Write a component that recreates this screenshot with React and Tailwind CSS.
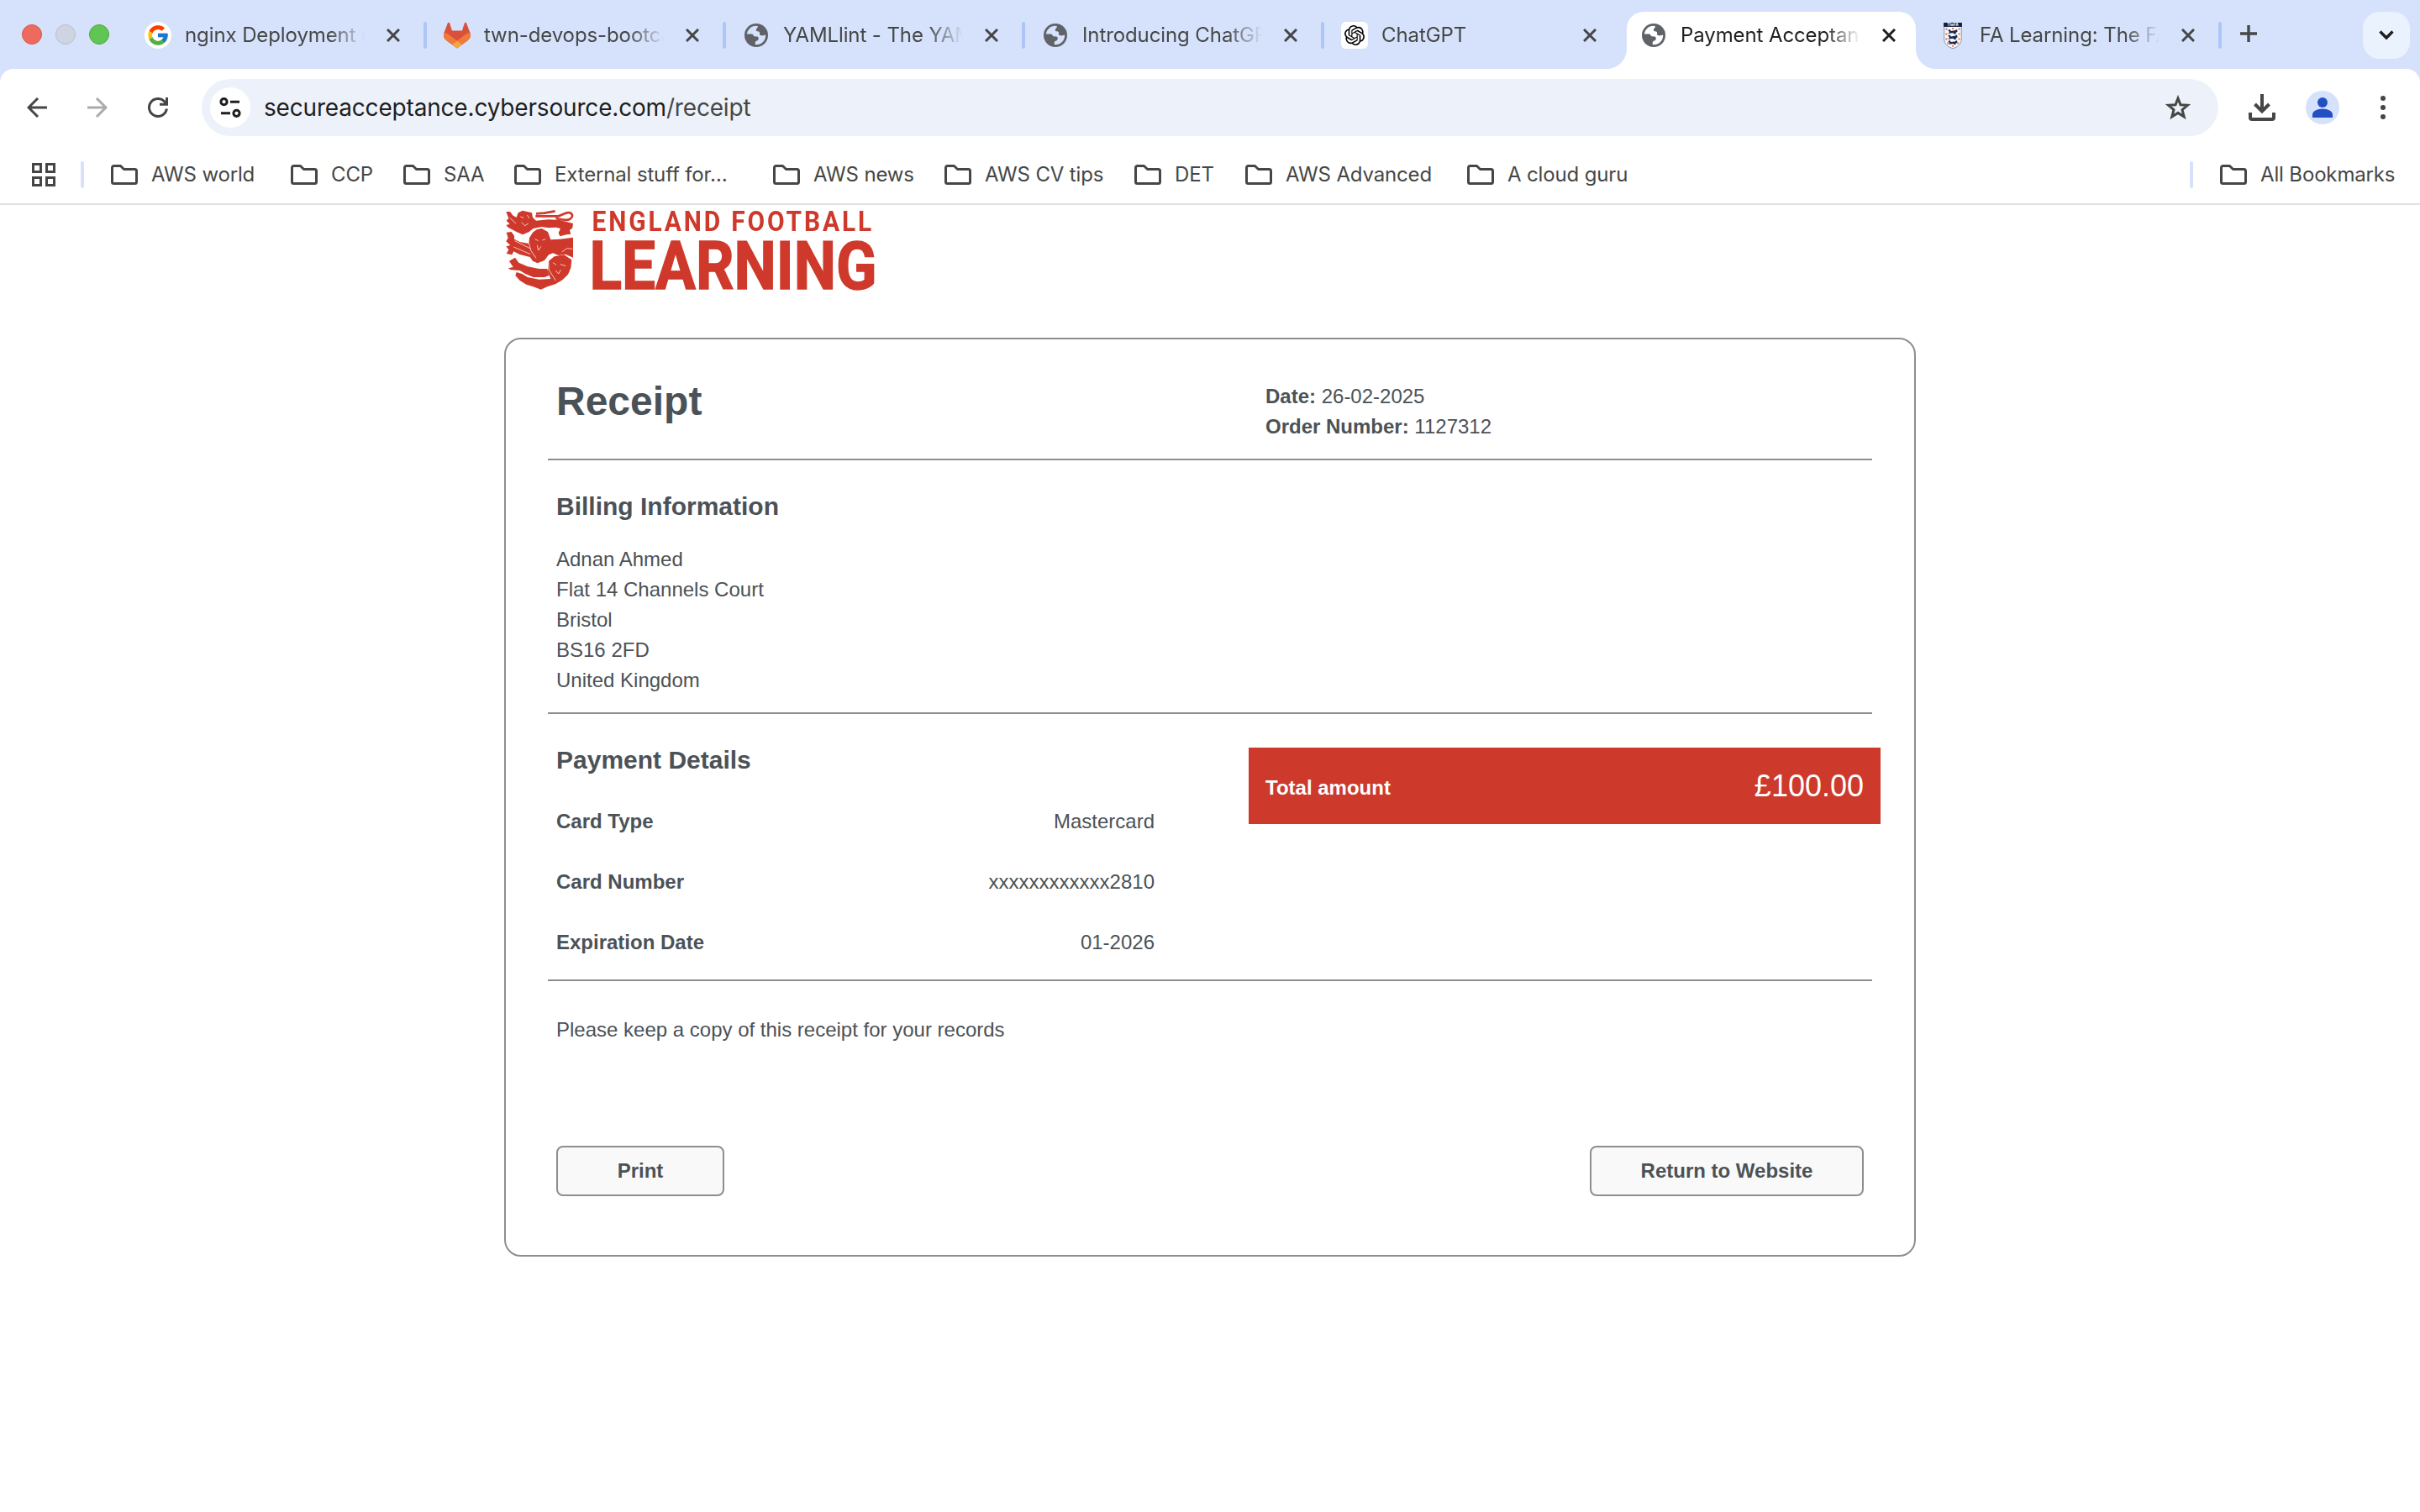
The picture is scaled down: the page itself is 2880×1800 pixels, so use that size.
import React from "react";
import { FcGoogle } from "react-icons/fc";
import { SiOpenai } from "react-icons/si";

function GitlabIcon() {
  return (
    <svg viewBox="0 0 25 24" className="size-8">
      <path fill="#d9513a" d="M24.507 9.5l-.034-.09L21.082.562a.896.896 0 00-1.694.091l-2.29 7.01H7.825L5.535.653a.898.898 0 00-1.694-.09L.451 9.411.416 9.5a6.297 6.297 0 002.09 7.278l.012.01.03.022 5.16 3.867 2.56 1.935 1.554 1.176a1.051 1.051 0 001.268 0l1.555-1.176 2.56-1.935 5.197-3.89.014-.01A6.297 6.297 0 0024.507 9.5z" />
      <path fill="#ee7a3b" d="M24.507 9.5l-.034-.09a11.44 11.44 0 00-4.56 2.051l-7.447 5.632 4.742 3.584 5.197-3.89.014-.01A6.297 6.297 0 0024.507 9.5z" />
      <path fill="#f2a83f" d="M7.707 20.677l2.56 1.935 1.555 1.176a1.051 1.051 0 001.268 0l1.555-1.176 2.56-1.935-4.743-3.584-4.755 3.584z" />
      <path fill="#ee7a3b" d="M5.01 11.461a11.43 11.43 0 00-4.56-2.05L.416 9.5a6.297 6.297 0 002.09 7.278l.012.01.03.022 5.16 3.867 4.745-3.584-7.444-5.632z" />
    </svg>
  );
}

function GlobeIcon({ gap = "#d6e2fc" }) {
  return (
    <svg viewBox="0 0 28 28" className="size-7">
      <circle cx="14" cy="14" r="14" fill="#5f6368" />
      <circle cx="14" cy="14" r="11.2" fill={gap} />
      <g fill="#5f6368">
        <path d="M15.2 1 C16.4 3.4 15.8 5.4 14 6.6 L14 9 L17 9.4 C18.6 10 18 12 18 13.6 L21 14.4 L26.6 13.2 A13 13 0 0 0 15.2 1 Z" />
        <path d="M1 12.6 H9 C10.6 12.8 10.2 14.8 11.6 15.2 L15 15.6 C17 16 17.4 18.6 15.8 20 C14.6 21 12.8 20.6 12.8 22.4 L12.6 26.6 A13 13 0 0 1 1 12.6 Z" />
      </g>
    </svg>
  );
}

function CrestIcon() {
  return (
    <svg viewBox="0 0 66 94" className="h-[31px] w-[22px]">
      <path d="M2 4 H64 V60 C64 78 50 88 33 93 C16 88 2 78 2 60 Z" fill="#f7f8fb" stroke="#8b93a6" strokeWidth="3" />
      <rect x="0" y="0" width="66" height="15" fill="#0f1c46" />
      <text x="33" y="12.5" textAnchor="middle" fontSize="13" fontWeight="700" fill="#fff" fontFamily="Inter, sans-serif">TheFA</text>
      <g fill="#1c2850">
        <path d="M15 27 L23 24 L26 30 L40 28 L48 24 L50 32 L43 37 L46 41 H38 L34 37 L24 38 L16 41 L21 33 Z" />
        <path d="M15 47 L23 44 L26 50 L40 48 L48 44 L50 52 L43 57 L46 61 H38 L34 57 L24 58 L16 61 L21 53 Z" />
        <path d="M16 67 L23 64 L26 70 L40 68 L48 64 L50 71 L43 75 L45 79 H38 L34 76 L24 77 L19 79 L21 73 Z" />
      </g>
      <g fill="#e8663f">
        {[20, 38, 56].map((y) => (
          <React.Fragment key={y}>
            <rect x="7" y={y} width="6" height="6" />
            <rect x="53" y={y} width="6" height="6" />
          </React.Fragment>
        ))}
        <rect x="30" y="19" width="6" height="5" />
        <rect x="30" y="82" width="6" height="5" />
        <rect x="12" y="71" width="6" height="6" />
        <rect x="49" y="71" width="6" height="6" />
      </g>
    </svg>
  );
}

function Close({ color }) {
  return (
    <svg viewBox="0 0 16 16" className="size-4" stroke={color} strokeWidth="3" fill="none">
      <path d="M1 1 L15 15 M15 1 L1 15" />
    </svg>
  );
}

function Flare({ side }) {
  return (
    <svg viewBox="0 0 24 24" className={side === "left" ? "absolute right-full bottom-0 size-6" : "absolute bottom-0 left-full size-6 -scale-x-100"}>
      <path d="M24 0 V24 H0 C13.3 24 24 13.3 24 0 Z" fill="#fff" />
    </svg>
  );
}

const tabs = [
  { title: "nginx Deployment Configuration", icon: <span className="flex size-8 items-center justify-center rounded-full bg-white"><FcGoogle className="size-7" /></span>, sep: true },
  { title: "twn-devops-bootcamp", icon: <GitlabIcon />, sep: true },
  { title: "YAMLlint - The YAML Validator", icon: <GlobeIcon />, sep: true },
  { title: "Introducing ChatGPT", icon: <GlobeIcon />, sep: true },
  { title: "ChatGPT", icon: <span className="flex size-8 items-center justify-center rounded-md bg-white"><SiOpenai className="size-6 text-black" /></span> },
  { title: "Payment Acceptance", icon: <GlobeIcon gap="#ffffff" />, active: true },
  { title: "FA Learning: The FA", icon: <CrestIcon />, sep: true },
];

function Tab({ title, icon, sep, active }) {
  return (
    <div className="flex h-[68px] w-[356px] shrink-0">
      <div className={active ? "relative flex w-[344px] rounded-t-[20px] bg-white pt-3 pl-4" : "flex w-[344px] pt-3 pl-4"}>
        {active && <Flare side="left" />}
        {active && <Flare side="right" />}
        <div className="flex size-8 shrink-0 items-center justify-center">{icon}</div>
        <div className={`ml-4 h-8 w-[214px] shrink-0 overflow-hidden text-2xl leading-8 tracking-[-0.1px] whitespace-nowrap [mask-image:linear-gradient(to_right,black_172px,transparent_214px)] ${active ? "text-[#1f1f1f]" : "text-[#454746]"}`}>
          {title}
        </div>
        <div className="ml-[26px] flex h-8 items-center">
          <Close color={active ? "#1f1f1f" : "#454746"} />
        </div>
      </div>
      {sep && <div className="mt-3 ml-1 h-8 w-1 rounded-full bg-[#adc6f7]" />}
    </div>
  );
}

function FolderIcon() {
  return (
    <svg viewBox="0 0 32 24" className="h-6 w-8 shrink-0" fill="none" stroke="#454746" strokeWidth="3" strokeLinejoin="round">
      <path d="M1.5 3.5 a2 2 0 0 1 2 -2 H11.5 L15.5 5.5 H28.5 a2 2 0 0 1 2 2 V20.5 a2 2 0 0 1 -2 2 H3.5 a2 2 0 0 1 -2 -2 Z" />
    </svg>
  );
}

function Bookmark({ label, width }) {
  return (
    <div className={`flex shrink-0 items-center gap-4 ${width}`}>
      <FolderIcon />
      <span className="text-2xl leading-8 tracking-[-0.15px] whitespace-nowrap text-[#454746]">{label}</span>
    </div>
  );
}

const bookmarks = [
  ["AWS world", "w-[214px]"],
  ["CCP", "w-[134px]"],
  ["SAA", "w-[132px]"],
  ["External stuff for…", "w-[308px]"],
  ["AWS news", "w-[204px]"],
  ["AWS CV tips", "w-[226px]"],
  ["DET", "w-[132px]"],
  ["AWS Advanced", "w-[264px]"],
  ["A cloud guru", "w-[240px]"],
];

function TabStrip() {
  return (
    <div className="flex h-[82px] bg-[#d6e2fc] pt-[14px]">
      <div className="flex w-[156px] shrink-0 gap-4 pt-[15px] pl-[26px]">
        <div className="size-6 rounded-full border border-[#d5584d] bg-[#ed6a5e]" />
        <div className="size-6 rounded-full border border-[#b9bfcb] bg-[#ced4e1]" />
        <div className="size-6 rounded-full border border-[#51a73e] bg-[#61c554]" />
      </div>
      {tabs.map((t) => (
        <Tab key={t.title} {...t} />
      ))}
      <svg viewBox="0 0 20 20" className="mt-4 ml-[18px] size-5 shrink-0" stroke="#454746" strokeWidth="3.4">
        <path d="M10 0 V20 M0 10 H20" />
      </svg>
      <div className="mr-3 ml-auto flex size-14 items-center justify-center rounded-[20px] bg-[#eaf2fd]">
        <svg viewBox="0 0 18 12" className="h-3 w-[18px]" fill="none" stroke="#1f1f1f" strokeWidth="3.4">
          <path d="M1.5 1.5 L9 9 L16.5 1.5" />
        </svg>
      </div>
    </div>
  );
}

function Toolbar() {
  return (
    <div className="bg-[#d6e2fc]">
      <div className="flex h-[92px] items-center rounded-t-2xl bg-white pl-8">
        <svg viewBox="0 0 24 24" className="size-6 shrink-0" fill="none" stroke="#454746" strokeWidth="3">
          <path d="M24 12 H2 M13 1 L2 12 L13 23" />
        </svg>
        <svg viewBox="0 0 24 24" className="ml-12 size-6 shrink-0" fill="none" stroke="#aaabaa" strokeWidth="3">
          <path d="M0 12 H22 M11 1 L22 12 L11 23" />
        </svg>
        <svg viewBox="0 0 24 24" className="ml-12 size-6 shrink-0" fill="none" stroke="#454746" strokeWidth="3">
          <path d="M22.4 13.5 A10.5 10.5 0 1 1 20.2 5.4 L22.2 8 M22.5 0 V8.3 H14" />
        </svg>
        <div className="ml-10 flex h-[68px] w-[2400px] shrink-0 items-center rounded-full bg-[#edf2fa] pl-[10px]">
          <div className="flex size-12 items-center justify-center rounded-full bg-white">
            <svg viewBox="0 0 26 24" className="h-6 w-[26px]" fill="none" stroke="#1f1f1f" strokeWidth="3">
              <circle cx="5.5" cy="5.2" r="3.6" />
              <circle cx="20.5" cy="18.8" r="3.6" />
              <path d="M13 5.2 H24 M2 18.8 H13" />
            </svg>
          </div>
          <div className="ml-4 text-[28px] leading-[34px] tracking-[-0.18px] whitespace-nowrap text-[#1f1f1f]">
            secureacceptance.cybersource.com<span className="text-[#474747]">/receipt</span>
          </div>
          <svg viewBox="0 0 30 30" className="mr-[33px] ml-auto size-[30px]" fill="none" stroke="#454746" strokeWidth="3">
            <path d="M15 4 L18 11.8 L26.4 12.3 L20 17.7 L22.2 26 L15 21.4 L7.8 26 L10 17.7 L3.6 12.3 L12 11.8 Z" />
          </svg>
        </div>
        <svg viewBox="0 0 32 32" className="ml-9 size-8 shrink-0" fill="none" stroke="#454746" strokeWidth="4">
          <path d="M16 0 V21 M7.5 12 L16 20.5 L24.5 12 M2 22 V28 a2 2 0 0 0 2 2 H28 a2 2 0 0 0 2 -2 V22" />
        </svg>
        <div className="ml-9 flex size-10 shrink-0 items-center justify-center rounded-full bg-[#d6e2fb]">
          <svg viewBox="0 0 24 24" className="size-6" fill="#2150c4">
            <circle cx="12" cy="6" r="6" />
            <path d="M0 24 V20.5 C0 16.5 5.5 13.6 12 13.6 S24 16.5 24 20.5 V24 Z" />
          </svg>
        </div>
        <svg viewBox="0 0 6 28" className="ml-[49px] h-7 w-1.5 shrink-0" fill="#454746">
          <circle cx="3" cy="3" r="3" />
          <circle cx="3" cy="14" r="3" />
          <circle cx="3" cy="25" r="3" />
        </svg>
      </div>
    </div>
  );
}

function BookmarksBar() {
  return (
    <div className="flex h-[70px] items-center border-b-2 border-[#e1e1e1] bg-white pl-[38px]">
      <svg viewBox="0 0 28 28" className="size-7 shrink-0" fill="none" stroke="#454746" strokeWidth="3">
        <path d="M1.5 1.5 H10.5 V10.5 H1.5 Z M17.5 1.5 H26.5 V10.5 H17.5 Z M1.5 17.5 H10.5 V26.5 H1.5 Z M17.5 17.5 H26.5 V26.5 H17.5 Z" />
      </svg>
      <div className="mr-8 ml-[30px] h-8 w-1 shrink-0 rounded-full bg-[#d6e2fb]" />
      {bookmarks.map(([label, width]) => (
        <Bookmark key={label} label={label} width={width} />
      ))}
      <div className="mr-8 ml-auto h-8 w-1 shrink-0 rounded-full bg-[#d6e2fb]" />
      <Bookmark label="All Bookmarks" width="w-[238px]" />
    </div>
  );
}

function Logo() {
  return (
    <svg viewBox="0 0 460 106" className="h-[106px] w-[460px] blur-[0.6px]" fill="#cf392b">
      <g transform="translate(-2 0) scale(0.33333)">
        <path d="M13 24 L27 24 L38 38 L50 44 L56 28 L72 20 L88 24 L105 28 L108 45 L120 56 L165 52 L205 54 L228 60 L252 66 L250 82 L240 90 L244 104 L228 106 L205 112 L200 100 L207 84 L190 80 L165 82 L140 78 L110 84 L95 96 L72 106 L50 96 L20 80 L13 72 L26 68 L14 56 L22 48 Z" />
        <path d="M120 31 L150 29 L188 22 M118 40 H200 L222 31 C248 20 258 40 240 51 C225 58 205 50 190 48" fill="none" stroke="#cf392b" strokeWidth="8" />
        <path d="M14 98 L32 96 L42 110 L42 122 L62 132 L94 138 L96 118 L108 98 L122 88 L140 84 L162 96 L172 124 L205 122 L252 116 V188 L225 176 L200 180 L180 172 L165 178 L150 198 L125 208 L108 200 L98 186 L60 176 L40 166 L34 178 L14 174 L22 160 L13 148 L28 144 L13 130 L20 118 Z" />
        <path d="M165 200 L185 184 L220 178 L247 196 L244 225 L234 248 L214 268 L190 282 L160 292 L137 302 L110 292 L85 284 L62 270 L46 252 L50 240 L70 246 L90 258 L130 266 L172 264 L162 240 Z" />
        <path d="M24 200 L45 188 L58 206 L90 220 L130 228 L160 228 L166 252 L150 258 L110 258 L80 245 L62 234 L30 232 L20 226 L38 222 Z" />
        <g fill="none" stroke="#fff" strokeOpacity="0.7" strokeWidth="3">
          <path d="M64 42 L76 46 M88 36 L96 48 M68 62 L80 74 L92 66 M26 46 L48 66" />
          <path d="M116 122 L128 128 M142 126 L154 122 M124 144 L128 162 L138 148 M44 128 L100 156 M40 150 L100 176 M94 136 L102 164 L120 190" />
          <path d="M180 206 L192 214 M206 212 L226 218 M190 234 L200 246 L208 232 M164 200 L166 232 L190 270" />
          <path d="M212 168 L230 155 L250 157" />
        </g>
      </g>
      <g fontFamily="Roboto, sans-serif" fontWeight="700">
        <g transform="translate(104.5 0) scale(0.88 1)">
          <text x="0" y="31" fontSize="34" textLength="378" lengthAdjust="spacing">ENGLAND FOOTBALL</text>
        </g>
        <text x="101.5" y="100" fontSize="80" stroke="#cf392b" strokeWidth="1.4" textLength="342" lengthAdjust="spacingAndGlyphs">LEARNING</text>
      </g>
    </svg>
  );
}

function Row({ label, value }) {
  return (
    <div className="flex justify-between">
      <span className="font-bold">{label}</span>
      <span>{value}</span>
    </div>
  );
}

function Receipt() {
  return (
    <div className="h-[1094px] w-[1680px] rounded-[20px] border-2 border-[#8e8e8e] bg-white px-[50px] font-['Liberation_Sans',Arial,sans-serif] text-2xl leading-9 text-[#4b5257]">
      <section className="grid h-36 grid-cols-[834px_1fr] border-b-2 border-[#8e8e8e]">
        <h1 className="pt-[47px] pl-[10px] text-5xl leading-[54px] font-bold">Receipt</h1>
        <div className="pt-[50px] pl-5">
          <p><b>Date:</b> 26-02-2025</p>
          <p><b>Order Number:</b> 1127312</p>
        </div>
      </section>
      <section className="h-[302px] border-b-2 border-[#8e8e8e] pt-[37px] pl-[10px]">
        <h2 className="mb-[27px] text-3xl leading-9 font-bold">Billing Information</h2>
        <p>Adnan Ahmed</p>
        <p>Flat 14 Channels Court</p>
        <p>Bristol</p>
        <p>BS16 2FD</p>
        <p>United Kingdom</p>
      </section>
      <section className="grid h-[318px] grid-cols-[834px_1fr] border-b-2 border-[#8e8e8e]">
        <div className="pt-[37px] pr-[112px] pl-[10px]">
          <h2 className="mb-[37px] text-3xl leading-9 font-bold">Payment Details</h2>
          <div className="flex flex-col gap-9">
            <Row label="Card Type" value="Mastercard" />
            <Row label="Card Number" value="xxxxxxxxxxxx2810" />
            <Row label="Expiration Date" value="01-2026" />
          </div>
        </div>
        <div className="mt-10 -mr-[10px] flex h-[91px] justify-between bg-[#cd392b] px-5 text-white">
          <span className="pt-[30px] font-bold">Total amount</span>
          <span className="pt-[25px] text-4xl leading-[41px]">£100.00</span>
        </div>
      </section>
      <section className="px-[10px] pt-10">
        <p>Please keep a copy of this receipt for your records</p>
        <div className="mt-[120px] flex justify-between">
          <button className="h-[60px] w-[208px] rounded-lg border-2 border-[#8e8e8e] bg-[#f9f9f9] font-bold max-w-[200px]">Print</button>
          <button className="h-[60px] w-[326px] rounded-lg border-2 border-[#8e8e8e] bg-[#f9f9f9] font-bold">Return to Website</button>
        </div>
      </section>
    </div>
  );
}

export default function App() {
  return (
    <div className="h-[1800px] w-[2880px] overflow-hidden bg-white font-['Inter',sans-serif]">
      <TabStrip />
      <Toolbar />
      <BookmarksBar />
      <main className="flex flex-col gap-[52px] pl-[600px]">
        <Logo />
        <Receipt />
      </main>
    </div>
  );
}
